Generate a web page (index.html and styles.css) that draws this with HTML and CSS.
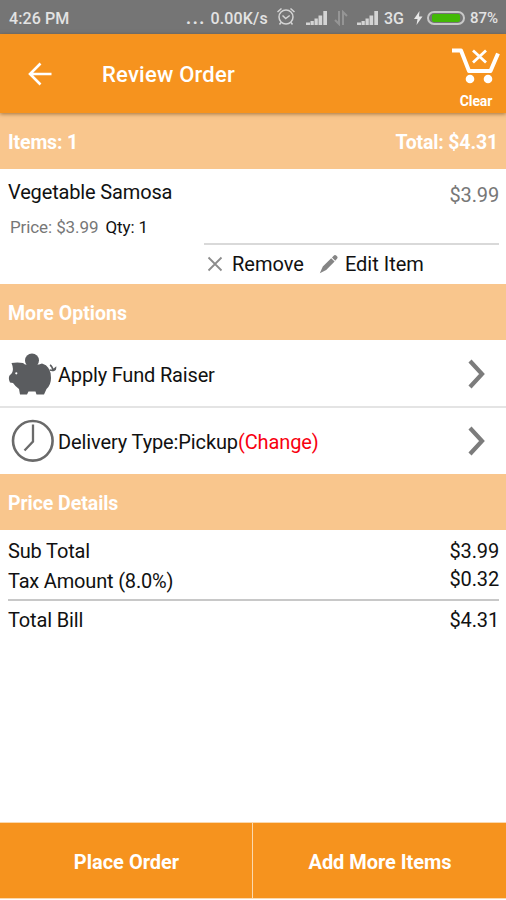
FILE: index.html
```html
<!DOCTYPE html>
<html lang="en">
<head>
<meta charset="utf-8">
<title>Review Order</title>
<link rel="stylesheet" href="styles.css">
</head>
<body>
<div class="screen">
  <div class="status">
    <span class="time">4:26 PM</span>
    <span class="dots">...</span>
    <span class="speed">0.00K/s</span>
    <svg class="alarm" width="20" height="20" viewBox="0 0 20 20" fill="none" stroke="#d4d4d4" stroke-width="1.5"><circle cx="10" cy="10" r="7"/><path d="M6.500 8.500l3.200 3 4-3M1.500 5l4-3.500M18.500 5l-4-3.500M5 15.500l-1.500 2M15 15.500l1.500 2"/></svg>
    <svg class="signal" width="22" height="16" viewBox="0 0 22 16" fill="#d4d4d4"><path d="M0 12.500h4V15H0zM4.500 11h3.300v4H4.500zM8.500 8.500h3.300V15H8.500zM12.500 5.500h3.700V15h-3.700zM17.300 1H21v14h-3.700z"/></svg>
    <svg class="updown" width="14" height="16" viewBox="0 0 14 16" fill="none" stroke="#959595" stroke-width="2"><path d="M5 1v13L1 10M9 15V2l4 4"/></svg>
    <svg class="signal two" width="22" height="16" viewBox="0 0 22 16" fill="#d4d4d4"><path d="M0 12.500h4V15H0zM4.500 11h3.300v4H4.500zM8.500 8.500h3.300V15H8.500zM12.500 5.500h3.700V15h-3.700zM17.300 1H21v14h-3.700z"/></svg>
    <span class="net">3G</span>
    <svg class="bolt" width="9" height="14" viewBox="0 0 9 14" fill="#e8e8e8"><path d="M5.500 0L0 8h3.500L2.500 14 8.500 5.500H5z"/></svg>
    <span class="battery"><span class="charge"></span></span>
    <span class="percent">87%</span>
  </div>

  <header class="bar">
    <svg class="back" width="24" height="24" viewBox="0 0 24 24" fill="none" stroke="#fff" stroke-width="2.600"><path d="M23.500 12H2.500M12.500 1.500L2 12l10.500 10.500"/></svg>
    <h1 class="title">Review Order</h1>
    <div class="clear">
      <svg width="48" height="37" viewBox="0 0 48 37" fill="none" stroke="#fff"><path stroke-width="4" stroke-linejoin="round" d="M0 3.500h9L17 24H38.500L46 6.500"/><path stroke-width="2.800" d="M21 3.500l13 12M34 3.500L21 15.500"/><circle cx="18" cy="32" r="4.300" fill="#fff" stroke="none"/><circle cx="36" cy="32" r="4.300" fill="#fff" stroke="none"/></svg>
      <span class="clear-label">Clear</span>
    </div>
  </header>

  <div class="band first"><span class="items">Items: 1</span><span class="total">Total: $4.31</span></div>

  <section class="item">
    <div class="item-top"><span class="name">Vegetable Samosa</span><span class="amount">$3.99</span></div>
    <div class="item-meta"><span class="price">Price: $3.99</span><span class="qty">Qty: 1</span></div>
    <div class="actions">
      <svg class="cross" width="16" height="16" viewBox="0 0 16 16" fill="none" stroke="#8c8c8c" stroke-width="1.800"><path d="M1.500 1.500l13 13M14.500 1.500l-13 13"/></svg>
      <span class="remove">Remove</span>
      <svg class="pencil" width="20" height="20" viewBox="0 0 20 20" fill="#858585"><path d="M.8 19.300l3-6.800 8.400-8.300 3.400 3.400-8.400 8.300zM13 3.400L15.200 1.300q1-.8 2 .1l1 1q.9 1 0 2l-2 2.300z"/></svg>
      <span class="edit">Edit Item</span>
    </div>
  </section>

  <div class="band"><span class="more">More Options</span></div>

  <div class="option divided">
    <svg class="icon" width="50" height="44" viewBox="0 0 50 44" fill="#5a5c5f"><circle cx="24" cy="8.500" r="7"/><path d="M3.500 11q6-1 11.500 0l2 1.500h14L34 11.500Q43 14 43 26q0 7-4.500 11L36 42.500h-7.500L27.500 39.500h-7L19 42.500H12L11 37Q7 34 5 31L2 30.500q-2-4-.5-7L4 21q2-4-.5-10z"/><path d="M41.500 18q6 1.500 6-2l-2.500 2q-1-4-3-5" fill="none" stroke="#5a5c5f" stroke-width="1.600"/><circle cx="8.300" cy="21.300" r="1.100" fill="#fff"/></svg>
    <span class="label fund">Apply Fund Raiser</span>
    <svg class="chevron" width="20" height="32" viewBox="0 0 20 32" fill="none" stroke="#7c7c7c" stroke-width="4.200"><path d="M3 3l12 13L3 29"/></svg>
  </div>
  <div class="option delivery-row">
    <svg class="icon" width="50" height="44" viewBox="0 0 50 44" fill="none" stroke="#6a6a6a" stroke-width="2.600"><circle cx="24.800" cy="21.800" r="19.800"/><path stroke-width="2.300" d="M25 5.500v17l-8.500 9"/></svg>
    <span class="label delivery">Delivery Type:Pickup<span class="change">(Change)</span></span>
    <svg class="chevron" width="20" height="32" viewBox="0 0 20 32" fill="none" stroke="#7c7c7c" stroke-width="4.200"><path d="M3 3l12 13L3 29"/></svg>
  </div>

  <div class="band"><span class="details">Price Details</span></div>

  <section class="prices">
    <div class="line sub"><span class="sub-label">Sub Total</span><span class="amount">$3.99</span></div>
    <div class="line tax"><span class="tax-label">Tax Amount (8.0%)</span><span class="amount">$0.32</span></div>
    <div class="line bill"><span class="bill-label">Total Bill</span><span class="amount">$4.31</span></div>
  </section>

  <footer class="footer">
    <div class="button"><span class="place">Place Order</span></div>
    <div class="button"><span class="add">Add More Items</span></div>
  </footer>
</div>
</body>
</html>
```

FILE: styles.css
```css
* { box-sizing: border-box; }
body { margin: 0; background: #fff; font-family: Roboto, "Liberation Sans", sans-serif; font-size: 20px; color: #111; }
svg { display: block; flex: none; }
span { white-space: nowrap; }
.screen { width: 506px; height: 900px; display: flex; flex-direction: column; background: #fff; overflow: hidden; }

.status { height: 34px; flex: none; display: flex; align-items: center; padding: 2px 8px 0 9px; background: #757575; color: #e3e3e3; font-size: 16px; font-weight: 500; }
.time { letter-spacing: .1px; }
.dots { margin-left: auto; font-size: 20px; letter-spacing: 1px; margin-top: -3px; }
.speed { margin-left: 5px; letter-spacing: .15px; }
.alarm { margin-left: 8px; margin-top: -2px; }
.signal { margin-left: 10px; }
.updown { margin-left: 6px; }
.signal.two { margin-left: 9px; }
.net { margin-left: 5px; }
.bolt { margin-left: 10px; margin-top: -1px; }
.battery { width: 38px; height: 14px; margin-left: 4px; padding: 1px 3px; border: 2px solid #c8c8c8; border-radius: 7px; }
.charge { display: block; height: 8px; background: #43b905; border-radius: 2px; }
.percent { margin-left: 5px; font-size: 15px; }

.bar { height: 79px; flex: none; display: flex; align-items: center; padding: 0 6px 0 28px; background: #f6931e; color: #fff; box-shadow: 0 1px 4px rgba(90, 50, 0, .55); z-index: 1; }
.title { margin: 0 0 0 50px; font-size: 22px; line-height: 28px; font-weight: 500; padding-top: 2px; letter-spacing: .22px; }
.clear { margin-left: auto; align-self: stretch; display: flex; flex-direction: column; align-items: center; padding-top: 13px; }
.clear-label { font-size: 14px; line-height: 16px; font-weight: 700; margin-top: 9px; letter-spacing: -.1px; }

.band { height: 56px; flex: none; display: flex; align-items: center; justify-content: space-between; padding: 2px 8px 0; background: #f9c68d; color: #fff; font-size: 19.500px; font-weight: 700; }
.items { letter-spacing: -.15px; }
.total { letter-spacing: -.15px; }
.more { letter-spacing: .05px; }
.details { letter-spacing: -.05px; }

.item { height: 115px; flex: none; padding: 10px 7px 0 8px; display: flex; flex-direction: column; }
.item-top { display: flex; justify-content: space-between; line-height: 26px; height: 29px; }
.name { letter-spacing: -.15px; }
.amount { letter-spacing: -.15px; }
.item-top .amount { color: #777; padding-top: 3px; }
.item-meta { display: flex; gap: 7px; padding-left: 2px; margin-top: 7px; font-size: 17px; line-height: 24px; height: 24px; letter-spacing: -.1px; }
.price { color: #777; }
.actions { margin: 4px 0 0 196px; border-top: 2px solid #d9d9d9; display: flex; align-items: center; padding: 7px 0 0 3px; line-height: 24px; }
.remove { margin-left: 9px; }
.pencil { margin-left: 15px; }
.edit { margin-left: 6px; }

.option { height: 67px; flex: none; display: flex; align-items: center; padding: 2px 19px 0 8px; }
.divided { height: 68px; border-bottom: 2px solid #e4e4e4; }
.delivery-row { height: 66px; padding-top: 0; }
.fund { letter-spacing: -.18px; padding-top: 2px; }
.delivery { letter-spacing: -.12px; padding-top: 2px; }
.chevron { margin-left: auto; }
.change { color: #f80010; }

.prices { padding: 7px 7px 0 8px; display: flex; flex-direction: column; }
.line { display: flex; justify-content: space-between; line-height: 28px; }
.sub-label, .bill-label { letter-spacing: -.15px; }
.tax { height: 34px; align-items: flex-start; }
.tax-label { padding-top: 2px; letter-spacing: -.18px; }
.bill { border-top: 2px solid #c8c8c8; padding-top: 5px; }

.footer { margin-top: auto; margin-bottom: 1px; height: 77px; flex: none; display: grid; grid-template-columns: 252px 253px; gap: 1px; background: #fbd9ae; border-top: 1px solid #fbd9ae; border-bottom: 1px solid #fbd9ae; }
.button { display: flex; align-items: center; justify-content: center; padding: 2px 0 0 1px; background: #f6931e; color: #fff; font-size: 20px; font-weight: 700; }
.add { letter-spacing: -.05px; }
```
